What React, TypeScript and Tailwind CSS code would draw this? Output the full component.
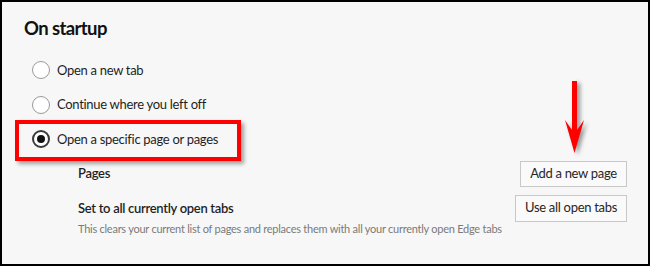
import React from 'react';

const font = { fontFamily: 'Lato, "Noto Sans", Arial, sans-serif' };

const options = [
  { id: 'new', label: 'Open a new tab' },
  { id: 'continue', label: 'Continue where you left off' },
  { id: 'specific', label: 'Open a specific page or pages' },
];

const Radio: React.FC<{ checked: boolean }> = ({ checked }) =>
  checked ? (
    <span className="flex h-[18px] w-[18px] items-center justify-center rounded-full border-2 border-[#3a3a3a] bg-white">
      <span className="h-[8px] w-[8px] rounded-full bg-[#111]" />
    </span>
  ) : (
    <span className="h-[18px] w-[18px] rounded-full border border-[#9a9a9a] bg-white" />
  );

export default function App() {
  const selected = 'specific';

  return (
    <div
      style={font}
      className="relative box-border h-[266px] w-[650px] overflow-hidden border-2 border-black bg-[#f7f7f7] text-[#1f1f1f]"
    >
      <div className="flex flex-col pl-[22px] pr-[21px] pt-[14px]">
        <h1 className="h-[24px] text-[18.5px] font-bold leading-[24px] tracking-[-0.6px] text-[#111]">On startup</h1>

        <div className="mt-[13px] flex flex-col pl-[8px]">
          {options.map((opt) => (
            <label key={opt.id} className="flex h-[34.5px] items-center gap-[7px] text-[13px] tracking-[-0.3px]">
              <Radio checked={opt.id === selected} />
              <span>{opt.label}</span>
            </label>
          ))}
        </div>

        <div className="mt-[4px] flex flex-col gap-[8px] pl-[54px] tracking-[-0.3px]">
          <div className="flex items-center justify-between">
            <span className="text-[13px] font-semibold">Pages</span>
            <button className="h-[26px] w-[107px] whitespace-nowrap border border-[#c8c8c8] bg-[#fafafa] text-[13px] text-[#262626]">
              Add a new page
            </button>
          </div>
          <div className="flex items-start justify-between">
            <div className="flex flex-col pt-[5px]">
              <span className="whitespace-nowrap text-[13px] font-semibold leading-[17px]">Set to all currently open tabs</span>
              <span className="mt-[4px] whitespace-nowrap text-[11px] leading-[15px] tracking-[-0.25px] text-[#7a7a7a]">
                This clears your current list of pages and replaces them with all your currently open Edge tabs
              </span>
            </div>
            <button className="h-[27px] w-[112px] whitespace-nowrap border border-[#c8c8c8] bg-[#fafafa] text-[13px] text-[#262626]">
              Use all open tabs
            </button>
          </div>
        </div>
      </div>

      {/* annotation: highlight box */}
      <div className="absolute left-[13px] top-[118px] h-[41px] w-[226px] border-4 border-[#ff0000] shadow-[3px_3px_4px_rgba(0,0,0,0.35)]" />

      {/* annotation: arrow */}
      <svg
        className="absolute left-[560px] top-[76px] drop-shadow-[3px_2px_2px_rgba(0,0,0,0.4)]"
        width="26"
        height="78"
        viewBox="0 0 26 78"
      >
        <polygon points="10,3 15,3 15,52 22,42 12.5,75 3,42 10,52" fill="#ff0000" />
      </svg>
    </div>
  );
}
